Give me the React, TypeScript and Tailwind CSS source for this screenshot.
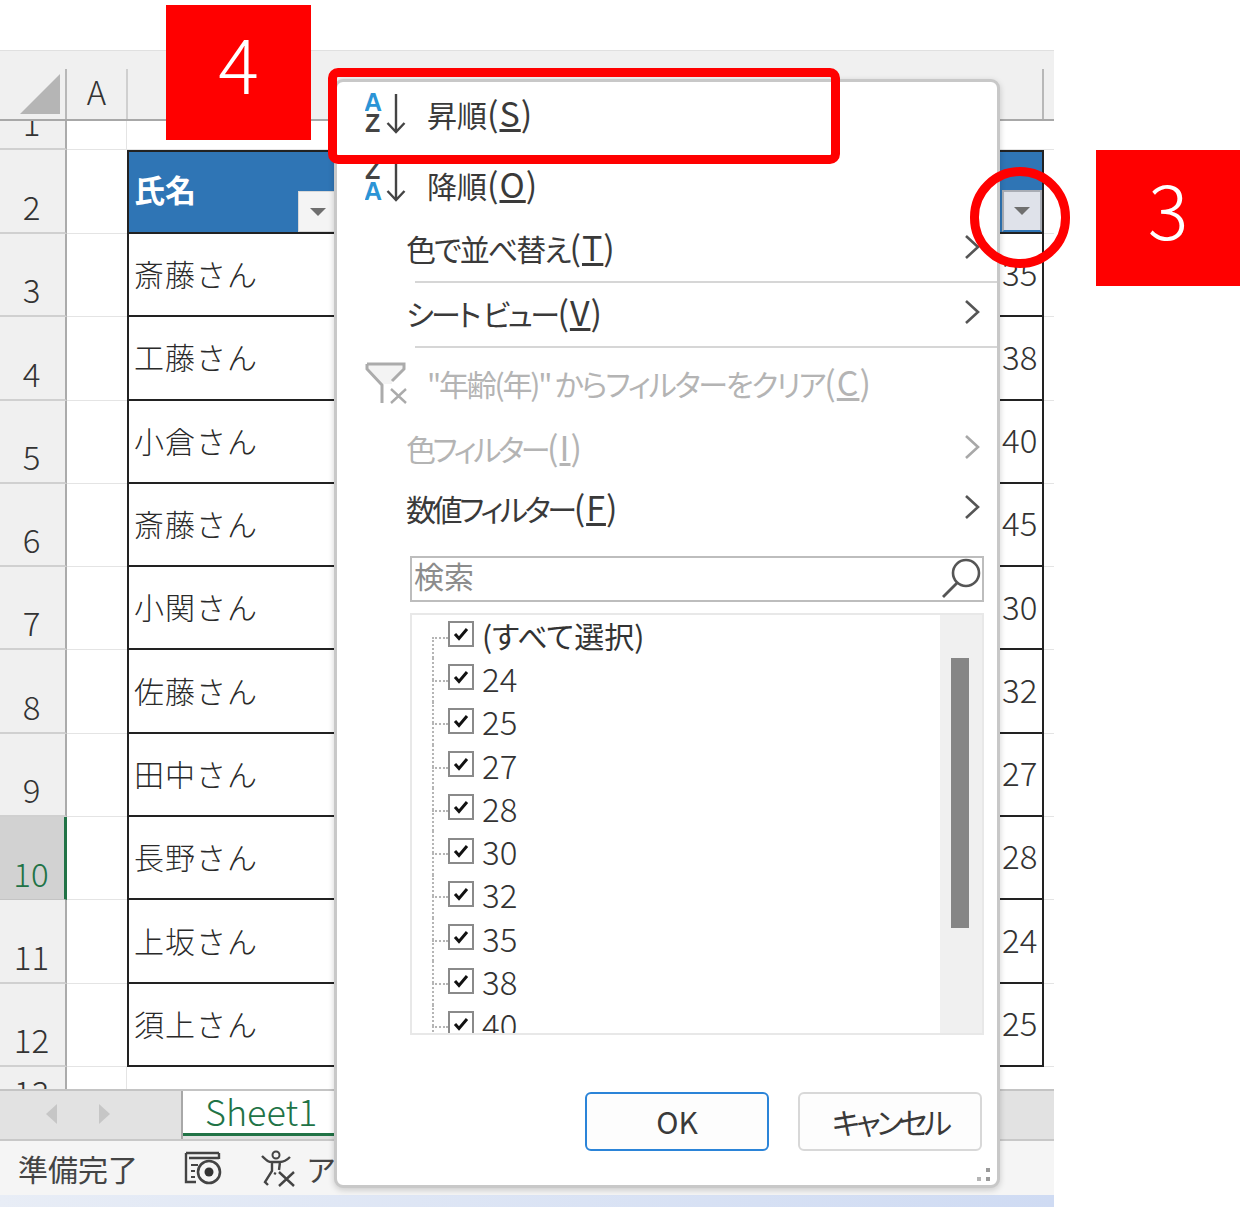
import React from "react";

const JP = "font-['Noto_Sans_CJK_JP','Noto_Sans',sans-serif]";

const rows: [string, string, string][] = [
  ["3", "斎藤さん", "35"],
  ["4", "工藤さん", "38"],
  ["5", "小倉さん", "40"],
  ["6", "斎藤さん", "45"],
  ["7", "小関さん", "30"],
  ["8", "佐藤さん", "32"],
  ["9", "田中さん", "27"],
  ["10", "長野さん", "28"],
  ["11", "上坂さん", "24"],
  ["12", "須上さん", "25"],
];

function RowHeader({ n, active, top }: { n: string; active?: boolean; top?: boolean }) {
  const place = top ? "items-start pt-[8px]" : "items-end pb-[9px]";
  const look = active
    ? "bg-[#d2d2d2] border-r-[3px] border-[#217346] border-b border-b-[#c4c4c4] text-[#217346]"
    : "bg-[#f0f0f0] border-r-2 border-[#ababab] border-b-2 border-b-[#d0d0d0] text-[#333]";
  return (
    <div className={`w-[67px] shrink-0 flex justify-center pr-[2px] ${place} ${look}`}>
      <span className="text-[33px] leading-[33px] font-light">{n}</span>
    </div>
  );
}

function Filter({ active }: { active?: boolean }) {
  return (
    <div
      className={
        active
          ? "w-[40px] h-[42px] shrink-0 self-end flex items-center justify-center bg-[#dfe2ea] border-2 border-[#a9adb5] border-b-[#2f75b5]"
          : "w-[40px] h-[41px] shrink-0 self-end flex items-center justify-center bg-[#f4f4f4] border border-[#d8d8d8]"
      }
    >
      <svg width="18" height="10" viewBox="0 0 18 10">
        <path d="M1 1 H17 L9 9 Z" fill="#6f6f6f" />
      </svg>
    </div>
  );
}

function DataRow({ n, name, age, active }: { n: string; name: string; age: string; active?: boolean }) {
  return (
    <div className="flex h-[83.3px] shrink-0">
      <RowHeader n={n} active={active} />
      <div className="w-[60px] shrink-0 border-b border-[#e4e4e4]" />
      <div className="w-[917px] shrink-0 flex justify-between items-center border-x-2 border-b-2 border-[#222]">
        <span className="pl-[5px] pb-[2px] text-[30px] tracking-[1px] font-light text-[#2a2a2a]">{name}</span>
        <span className="w-[41px] pl-[1px] pb-[3px] text-[33px] font-light text-[#333]">{age}</span>
      </div>
      <div className="flex-1 border-b border-[#e4e4e4]" />
    </div>
  );
}

function Chevron({ color = "#555" }: { color?: string }) {
  return (
    <svg width="16" height="26" viewBox="0 0 16 26" className="ml-auto mr-[17px] shrink-0">
      <path d="M2 2 L14 13 L2 24" fill="none" stroke={color} strokeWidth="2.6" />
    </svg>
  );
}

function SortIcon({ asc }: { asc?: boolean }) {
  const font = "Liberation Sans, sans-serif";
  return (
    <svg width="42" height="44" viewBox="0 0 42 44" className="shrink-0">
      <text x="-1" y={asc ? 20 : 41} fontFamily={font} fontWeight="700" fontSize="25" fill="#2b94d6">A</text>
      <text x="0" y={asc ? 41 : 20} fontFamily={font} fontWeight="700" fontSize="25" fill="#444">Z</text>
      <path d="M31 3 V41 M22.5 32 L31 41 L39.5 32" fill="none" stroke="#444" strokeWidth="2.4" />
    </svg>
  );
}

function Key({ k }: { k: string }) {
  return (
    <span className="text-[34px] leading-none tracking-[1px]">
      (<u>{k}</u>)
    </span>
  );
}

function Check({ label }: { label: string }) {
  const first = label.startsWith("(");
  return (
    <div className="flex items-center h-[43.3px] shrink-0 ml-[20px]">
      <div className="w-[16px] h-full flex flex-col shrink-0">
        <div className={first ? "h-1/2" : "h-1/2 border-l-2 border-dotted border-[#b5b5b5]"} />
        <div className="h-1/2 border-l-2 border-t-2 border-dotted border-[#b5b5b5]" />
      </div>
      <div className="w-[26px] h-[26px] mb-[5px] shrink-0 flex items-center justify-center border-2 border-[#8a8a8a] bg-white">
        <svg width="16" height="14" viewBox="0 0 16 14">
          <path d="M2 7 L6 11.5 L14 2" fill="none" stroke="#111" strokeWidth="3" />
        </svg>
      </div>
      <span className={first ? "ml-[8px] mb-[4px] text-[30px] leading-[40px] text-[#333]" : "ml-[8px] mb-[4px] text-[33px] leading-[40px] text-[#333] font-light"}>{label}</span>
    </div>
  );
}

function Menu() {
  return (
    <div className="absolute left-[334px] top-[79px] w-[666px] h-[1109px] flex flex-col bg-white border-[3px] border-[#c8c8c8] rounded-[9px] shadow-[0_2px_6px_rgba(0,0,0,0.18)] text-[30px] text-[#3a3a3a] [font-feature-settings:'palt']">
      <div className="h-[67px] flex items-center pl-[28px] gap-[20px] pb-[6px] shrink-0">
        <SortIcon asc />
        <span className="pt-[4px]">昇順<Key k="S" /></span>
      </div>
      <div className="h-[70px] flex items-center pl-[28px] gap-[20px] pb-[6px] shrink-0">
        <SortIcon />
        <span className="pt-[8px]">降順<Key k="O" /></span>
      </div>
      <div className="h-[62px] flex items-center pl-[69px] pb-[6px] shrink-0">
        <span className="pt-[2px] tracking-[-2px]">色で並べ替え<Key k="T" /></span>
        <Chevron />
      </div>
      <div className="h-[2px] ml-[78px] bg-[#d6d6d6] shrink-0" />
      <div className="h-[63px] flex items-center pl-[69px] pb-[6px] shrink-0">
        <span className="pt-[4px] tracking-[-2.6px]">シート ビュー<Key k="V" /></span>
        <Chevron />
      </div>
      <div className="h-[2px] ml-[78px] bg-[#d6d6d6] shrink-0" />
      <div className="h-[72px] flex items-center pl-[28px] gap-[20px] pb-[6px] shrink-0 text-[#b4b4b4]">
        <svg width="42" height="42" viewBox="0 0 42 42" className="shrink-0 mt-[4px]">
          <path d="M2 2 H39 V7 L27 19 V22 H17 L2 7 Z" fill="#f3f3f3" />
          <path d="M2 2 H39 V7 L27 19 M2 2 V7 L17 23 V41" fill="none" stroke="#ababab" strokeWidth="3" />
          <path d="M26 27 L41 41 M41 27 L26 41" fill="none" stroke="#ababab" strokeWidth="2.4" />
        </svg>
        <span className="pt-[4px] tracking-[-2.2px]">"年齢(年)" からフィルターをクリア<Key k="C" /></span>
      </div>
      <div className="h-[60px] flex items-center pl-[69px] pb-[6px] shrink-0 text-[#b4b4b4]">
        <span className="pt-[2px] tracking-[-3.4px]">色フィルター<Key k="I" /></span>
        <Chevron color="#a8a8a8" />
      </div>
      <div className="h-[60px] flex items-center pl-[69px] pb-[6px] shrink-0">
        <span className="pt-[2px] tracking-[-3.4px]">数値フィルター<Key k="F" /></span>
        <Chevron />
      </div>
      <div className="mt-[16px] ml-[73px] w-[574px] h-[46px] shrink-0 flex items-center justify-between border-2 border-[#bdbdbd] pl-[2px] text-[#8c8c8c]">
        <span className="pb-[8px] leading-[36px]">検索</span>
        <svg width="42" height="42" viewBox="0 0 42 42" className="shrink-0 mr-[-1px]">
          <circle cx="25" cy="15" r="13" fill="none" stroke="#555" strokeWidth="2.6" />
          <path d="M16 25 L2 39" fill="none" stroke="#555" strokeWidth="2.8" />
        </svg>
      </div>
      <div className="mt-[11px] ml-[73px] w-[574px] h-[422px] shrink-0 flex justify-between border-2 border-[#e8e8e8] overflow-hidden">
        <div className="flex flex-col">
          {["(すべて選択)", "24", "25", "27", "28", "30", "32", "35", "38", "40"].map((l) => (
            <Check key={l} label={l} />
          ))}
        </div>
        <div className="w-[42px] h-full bg-[#f0f0f0] pt-[43px] pr-[2px] flex justify-center">
          <div className="w-[18px] h-[270px] bg-[#868686]" />
        </div>
      </div>
      <div className="mt-[57px] ml-[248px] flex gap-[29px] shrink-0">
        <div className="w-[184px] h-[59px] flex items-center justify-center bg-[#fdfdfd] border-2 border-[#2b84d8] rounded-[6px]">OK</div>
        <div className="w-[184px] h-[59px] flex items-center justify-center bg-[#fdfdfd] border-2 border-[#d8d8d8] rounded-[6px] tracking-[-4px]">キャンセル</div>
      </div>
      <svg width="16" height="16" viewBox="0 0 16 16" className="absolute right-[5px] bottom-[2px]">
        <rect x="10" y="1" width="4" height="4" fill="#9a9a9a" />
        <rect x="1" y="10" width="4" height="4" fill="#b5b5b5" />
        <rect x="10" y="10" width="4" height="4" fill="#9a9a9a" />
      </svg>
    </div>
  );
}

export default function App() {
  return (
    <div className={`relative w-[1240px] h-[1207px] overflow-hidden bg-white pt-[50px] ${JP}`}>
      <div className="w-[1054px] flex flex-col">
        <div className="h-[71px] bg-[#f0f0f0] border-t border-[#e0e0e0] border-b-2 border-b-[#a8a8a8] flex shrink-0">
          <div className="w-[67px] shrink-0 flex items-end justify-end pb-[5px] pr-[5px] border-r-2 border-[#b8b8b8] mt-[18px]">
            <svg width="40" height="40" viewBox="0 0 40 40">
              <path d="M40 0 V40 H0 Z" fill="#b5b5b5" />
            </svg>
          </div>
          <div className="w-[61px] shrink-0 mt-[18px] border-r-2 border-[#cfcfcf] flex items-center justify-center pb-[6px] text-[33px] leading-[40px] font-light text-[#333]">A</div>
          <div className="w-[916px] shrink-0 mt-[18px] border-r-2 border-[#b8b8b8]" />
        </div>
        <div className="h-[968px] overflow-hidden flex flex-col shrink-0">
          <div className="flex h-[29px] shrink-0 overflow-hidden">
            <RowHeader n="1" />
            <div className="w-[60px] shrink-0 border-b border-r border-[#e4e4e4]" />
            <div className="flex-1 border-b border-[#e4e4e4]" />
          </div>
          <div className="flex h-[84px] shrink-0">
            <RowHeader n="2" />
            <div className="w-[60px] shrink-0 border-b border-[#e4e4e4]" />
            <div className="w-[917px] shrink-0 flex justify-between bg-[#2f75b5] border-x-2 border-y-2 border-[#222]">
              <div className="w-[209px] flex justify-between items-center">
                <span className="pl-[5px] pb-[5px] text-[31px] font-bold text-white">氏名</span>
                <Filter />
              </div>
              <Filter active />
            </div>
            <div className="flex-1 border-b border-[#e4e4e4]" />
          </div>
          {rows.map(([n, name, age]) => (
            <DataRow key={n} n={n} name={name} age={age} active={n === "10"} />
          ))}
          <div className="flex h-[83.3px] shrink-0">
            <RowHeader n="13" top />
            <div className="w-[60px] shrink-0 border-r border-[#e4e4e4]" />
          </div>
        </div>
        <div className="h-[52px] bg-[#e2e2e2] border-y-2 border-t-[#c4c4c4] border-b-[#c8c8c8] flex shrink-0">
          <div className="w-[183px] shrink-0 flex items-center gap-[42px] pl-[46px] pb-[2px] border-r-2 border-[#a8a8a8]">
            <svg width="11" height="20" viewBox="0 0 11 20"><path d="M11 0 V20 L0 10 Z" fill="#c6c6c6" /></svg>
            <svg width="11" height="20" viewBox="0 0 11 20"><path d="M0 0 V20 L11 10 Z" fill="#c6c6c6" /></svg>
          </div>
          <div className="w-[170px] h-[45px] shrink-0 bg-white border-b-[3px] border-[#217346] pl-[22px] pb-[4px] flex items-center text-[36px] leading-[40px] font-light text-[#217346]">Sheet1</div>
        </div>
        <div className="h-[54px] bg-[#f5f5f5] flex items-center pl-[18px] text-[30px] text-[#444] shrink-0 overflow-hidden whitespace-nowrap">
          <span className="w-[166px] shrink-0">準備完了</span>
          <svg width="38" height="36" viewBox="0 0 38 36" className="shrink-0">
            <path d="M2 3 H35 M2 3 V32 H12 M35 3 V9 M5 8 H35" fill="none" stroke="#444" strokeWidth="2.4" />
            <path d="M7 15 H14 M7 21 H11 M7 27 H11" fill="none" stroke="#444" strokeWidth="2" />
            <circle cx="25" cy="22" r="11" fill="none" stroke="#444" strokeWidth="2.6" />
            <circle cx="25" cy="22" r="4.5" fill="#333" />
          </svg>
          <svg width="36" height="38" viewBox="0 0 36 38" className="ml-[38px] shrink-0">
            <circle cx="16" cy="6" r="3.5" fill="none" stroke="#444" strokeWidth="2" />
            <path d="M2 7 C8 13 9 13 12 13 L20 13 C24 13 26 12 30 8 M12 13 L12 22 L5 33 L8 36 M20 13 L19 21 M14 24 L16 25" fill="none" stroke="#444" strokeWidth="2.4" />
            <path d="M19 23 L34 37 M34 23 L19 37" fill="none" stroke="#444" strokeWidth="2.4" />
          </svg>
          <span className="ml-[10px] shrink-0">アクセシビリティ</span>
        </div>
        <div className="h-[12px] bg-gradient-to-r from-[#e8edf6] to-[#cfdbf3] shrink-0" />
      </div>

      <Menu />

      <div className="absolute left-[166px] top-[5px] w-[145px] h-[135px] bg-[#ff0000] flex items-center justify-center pb-[24px] text-[76px] font-light text-white">4</div>
      <div className="absolute left-[1096px] top-[150px] w-[144px] h-[136px] bg-[#ff0000] flex items-center justify-center pb-[22px] text-[76px] font-light text-white">3</div>
      <div className="absolute left-[328px] top-[68px] w-[512px] h-[96px] border-[9px] border-[#ff0000] rounded-[10px]" />
      <div className="absolute left-[970px] top-[167px] w-[100px] h-[101px] border-[9px] border-[#ff0000] rounded-full" />
    </div>
  );
}
